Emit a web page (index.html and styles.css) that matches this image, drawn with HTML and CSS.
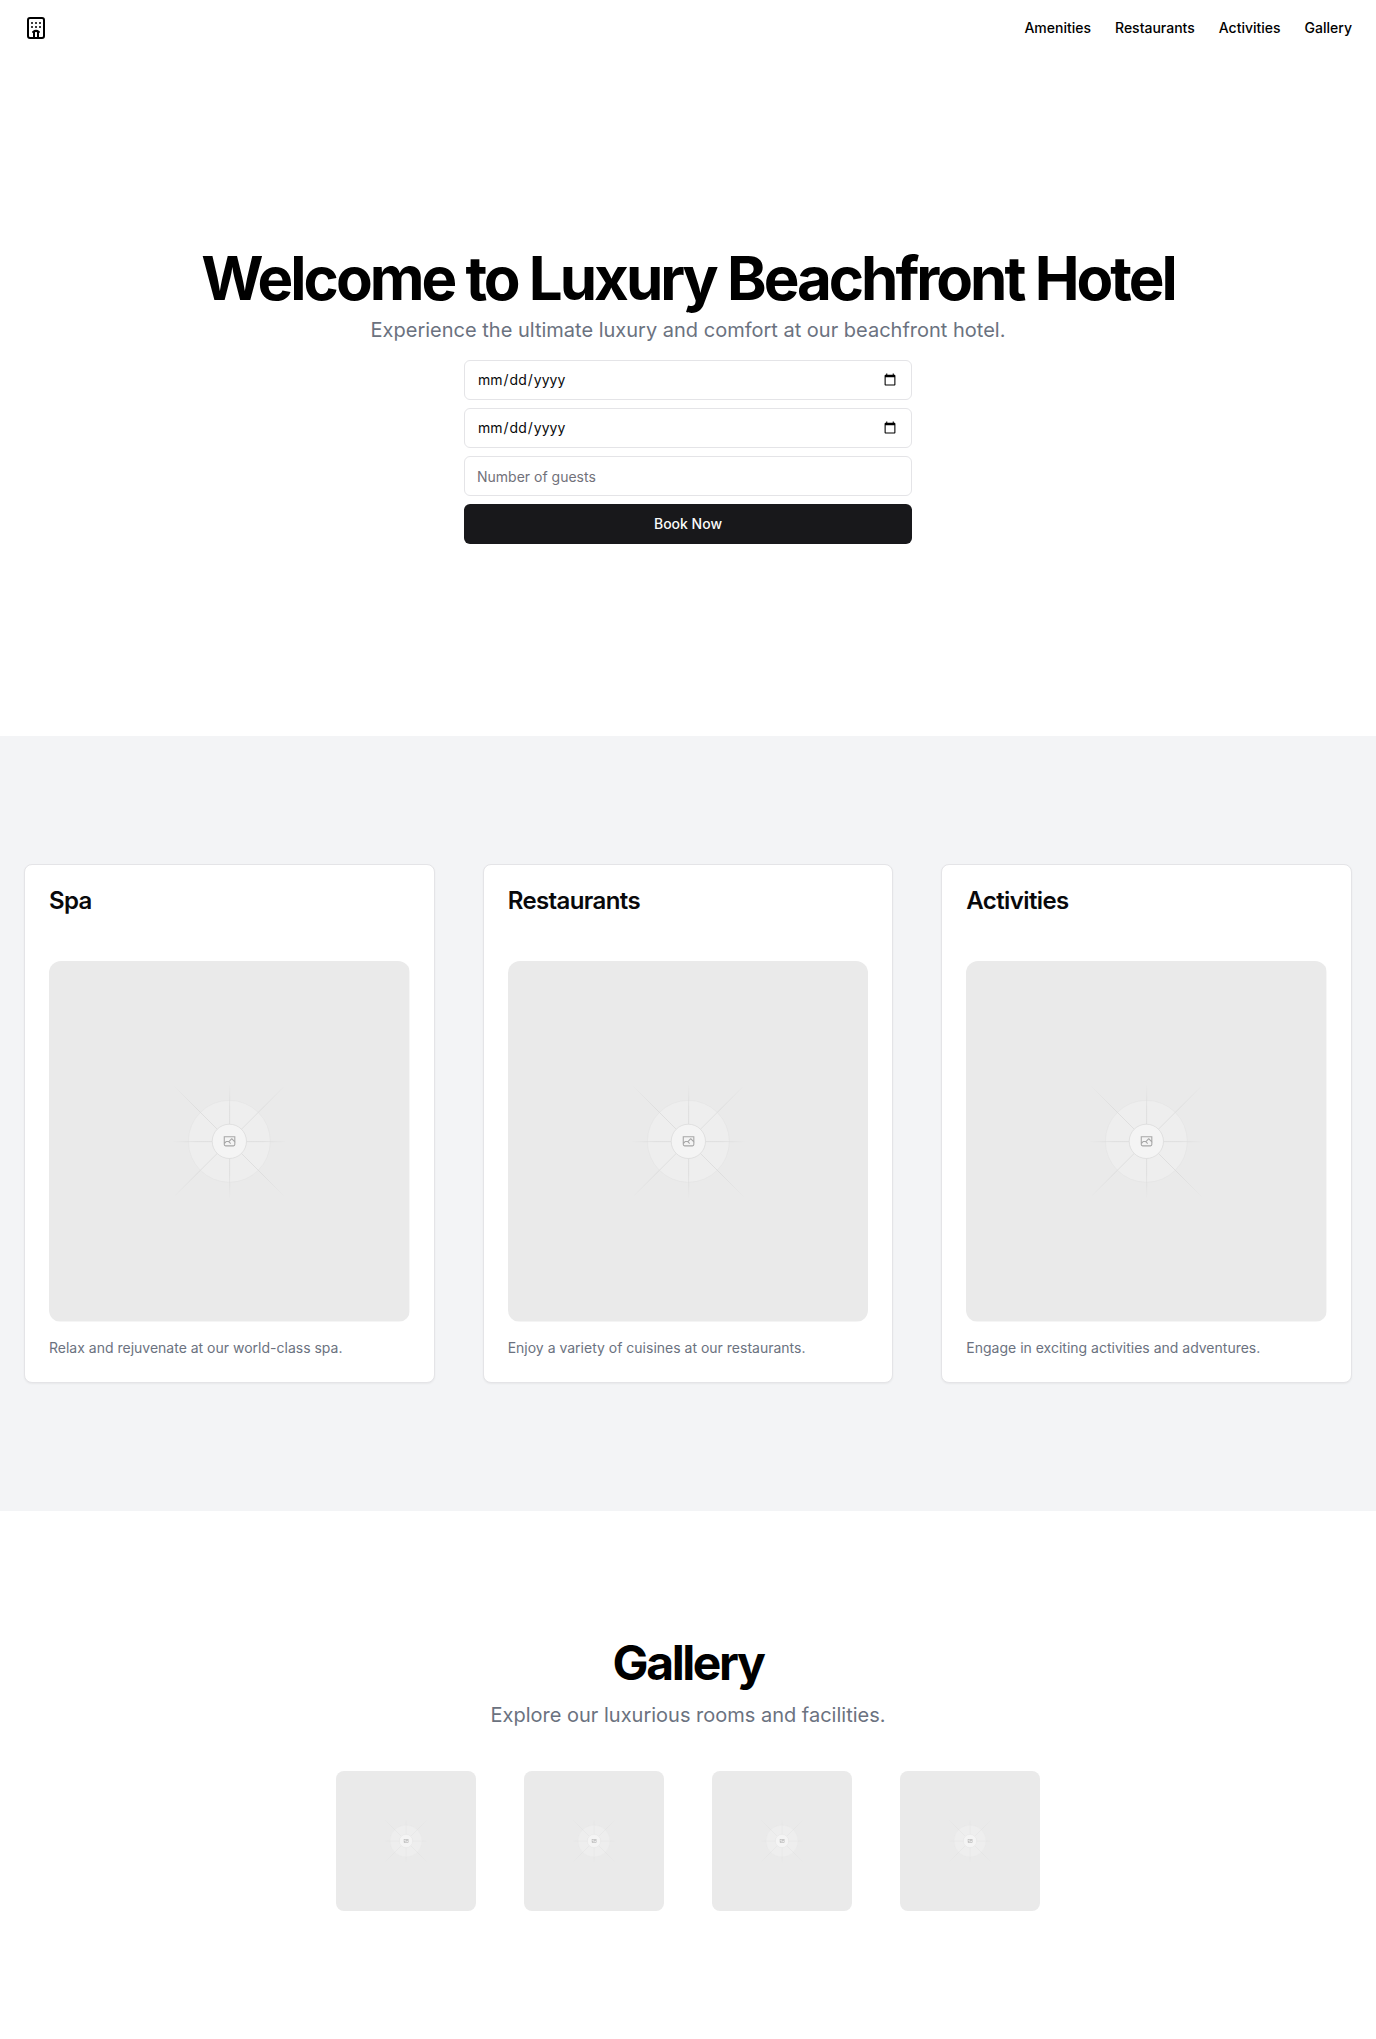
FILE: index.html
```html
<!DOCTYPE html>
<html lang="en">
<head>
<meta charset="utf-8">
<meta name="viewport" content="width=device-width, initial-scale=1">
<title>Luxury Beachfront Hotel</title>
<link rel="stylesheet" href="styles.css">
</head>
<body>
<svg class="defs" aria-hidden="true">
  <defs>
    <linearGradient id="fade-h" gradientUnits="userSpaceOnUse" x1="410" y1="0" x2="790" y2="0">
      <stop offset="0" stop-color="#c9c9c9" stop-opacity="0"/><stop offset=".208" stop-color="#c9c9c9"/>
      <stop offset=".792" stop-color="#c9c9c9"/><stop offset="1" stop-color="#c9c9c9" stop-opacity="0"/>
    </linearGradient>
    <linearGradient id="fade-v" gradientUnits="userSpaceOnUse" x1="0" y1="410" x2="0" y2="790">
      <stop offset="0" stop-color="#c9c9c9" stop-opacity="0"/><stop offset=".208" stop-color="#c9c9c9"/>
      <stop offset=".792" stop-color="#c9c9c9"/><stop offset="1" stop-color="#c9c9c9" stop-opacity="0"/>
    </linearGradient>
    <linearGradient id="fade-d" gradientUnits="userSpaceOnUse" x1="415" y1="415" x2="785" y2="785">
      <stop offset="0" stop-color="#c9c9c9" stop-opacity="0"/><stop offset=".208" stop-color="#c9c9c9"/>
      <stop offset=".792" stop-color="#c9c9c9"/><stop offset="1" stop-color="#c9c9c9" stop-opacity="0"/>
    </linearGradient>
    <linearGradient id="fade-u" gradientUnits="userSpaceOnUse" x1="415" y1="785" x2="785" y2="415">
      <stop offset="0" stop-color="#c9c9c9" stop-opacity="0"/><stop offset=".208" stop-color="#c9c9c9"/>
      <stop offset=".792" stop-color="#c9c9c9"/><stop offset="1" stop-color="#c9c9c9" stop-opacity="0"/>
    </linearGradient>
    <symbol id="placeholder" viewBox="0 0 1200 1200">
      <rect width="1200" height="1200" fill="#eaeaea"/>
      <g opacity=".5">
        <circle cx="600" cy="600" r="136" fill="#f3f3f3" stroke="#c9c9c9" stroke-opacity=".35" stroke-width="2.4"/>
        <g stroke-width="2.4" fill="none">
          <path stroke="url(#fade-h)" d="M410 601H790"/>
          <path stroke="url(#fade-v)" d="M601 410V790"/>
          <path stroke="url(#fade-d)" d="M415 415 785 785"/>
          <path stroke="url(#fade-u)" d="M415 785 785 415"/>
        </g>
        <circle cx="600" cy="600" r="57" fill="#fff" stroke="#c9c9c9" stroke-width="2.4"/>
        <path fill="#666" fill-rule="evenodd" d="M616.426 586.58h-31.434v16.176l3.553-3.554.531-.531h9.068l.074-.074 8.463-8.463h2.565l7.18 7.181V586.58Zm-15.715 14.654 3.698 3.699 1.283 1.282-2.565 2.565-1.282-1.283-5.2-5.199h-6.066l-5.514 5.514-.073.073v2.876a2.418 2.418 0 0 0 2.418 2.418h26.598a2.418 2.418 0 0 0 2.418-2.418v-8.317l-8.463-8.463-7.181 7.181-.071.072Zm-19.347 5.442v4.085a6.045 6.045 0 0 0 6.046 6.045h26.598a6.044 6.044 0 0 0 6.045-6.045v-7.108l1.356-1.355-1.282-1.283-.074-.073v-17.989h-38.689v23.43l-.146.146.146.147Z"/>
      </g>
    </symbol>
  </defs>
</svg>

<header class="header">
  <a class="logo" href="#" aria-label="Home">
    <svg width="24" height="24" viewBox="0 0 24 24" fill="none" stroke="currentColor" stroke-width="2" stroke-linecap="round" stroke-linejoin="round">
      <path d="M10 22v-6.57M12 11h.01M12 7h.01M14 15.43V22M15 16a5 5 0 0 0-6 0M16 11h.01M16 7h.01M8 11h.01M8 7h.01"/>
      <rect x="4" y="2" width="16" height="20" rx="2"/>
    </svg>
  </a>
  <nav class="nav">
    <a href="#amenities">Amenities</a>
    <a href="#restaurants">Restaurants</a>
    <a href="#activities">Activities</a>
    <a href="#gallery">Gallery</a>
  </nav>
</header>

<main>
  <section class="hero">
    <h1>Welcome to Luxury Beachfront Hotel</h1>
    <p class="lead">Experience the ultimate luxury and comfort at our beachfront hotel.</p>
    <form class="booking">
      <input class="field" type="date" aria-label="Check-in date">
      <input class="field" type="date" aria-label="Check-out date">
      <input class="field" type="number" placeholder="Number of guests" aria-label="Number of guests">
      <button class="book" type="submit">Book Now</button>
    </form>
  </section>

  <section class="features" id="amenities">
    <article class="card">
      <h3>Spa</h3>
      <svg class="photo" viewBox="0 0 1200 1200" role="img" aria-label="Spa"><use href="#placeholder"/></svg>
      <p>Relax and rejuvenate at our world-class spa.</p>
    </article>
    <article class="card" id="restaurants">
      <h3>Restaurants</h3>
      <svg class="photo" viewBox="0 0 1200 1200" role="img" aria-label="Restaurants"><use href="#placeholder"/></svg>
      <p>Enjoy a variety of cuisines at our restaurants.</p>
    </article>
    <article class="card" id="activities">
      <h3>Activities</h3>
      <svg class="photo" viewBox="0 0 1200 1200" role="img" aria-label="Activities"><use href="#placeholder"/></svg>
      <p>Engage in exciting activities and adventures.</p>
    </article>
  </section>

  <section class="gallery" id="gallery">
    <h2>Gallery</h2>
    <p class="lead">Explore our luxurious rooms and facilities.</p>
    <div class="thumbs">
      <svg class="thumb" viewBox="0 0 1200 1200" role="img" aria-label="Room"><use href="#placeholder"/></svg>
      <svg class="thumb" viewBox="0 0 1200 1200" role="img" aria-label="Suite"><use href="#placeholder"/></svg>
      <svg class="thumb" viewBox="0 0 1200 1200" role="img" aria-label="Pool"><use href="#placeholder"/></svg>
      <svg class="thumb" viewBox="0 0 1200 1200" role="img" aria-label="Lounge"><use href="#placeholder"/></svg>
    </div>
  </section>
</main>
</body>
</html>
```
FILE: styles.css
```css
*, *::before, *::after { box-sizing: border-box; }
body {
  margin: 0;
  background: #fff;
  color: #000;
  font-family: Inter, "Liberation Sans", sans-serif;
  font-size: 16px;
  line-height: 24px;
}
h1, h2, h3, p { margin: 0; }
a { color: inherit; text-decoration: none; }
.defs { position: absolute; width: 0; height: 0; }

.header {
  display: flex;
  align-items: center;
  justify-content: space-between;
  height: 56px;
  padding: 0 24px;
}
.logo, .logo svg { display: block; }
.nav {
  display: flex;
  gap: 24px;
  font-size: 14px;
  line-height: 20px;
  font-weight: 500;
}

.hero {
  display: flex;
  flex-direction: column;
  align-items: center;
  padding: 192px 24px;
  text-align: center;
}
h1, h2 {
  font-weight: 700;
  line-height: 1;
  letter-spacing: -0.05em;
}
h1 { font-size: 60px; }
h2 { font-size: 48px; }
.lead {
  color: #6b7280;
  font-size: 20px;
  line-height: 28px;
}
.hero .lead { margin: 8px 0 16px; }

.booking {
  display: flex;
  flex-direction: column;
  gap: 8px;
  width: 100%;
  max-width: 448px;
}
.field, .book {
  width: 100%;
  height: 40px;
  border-radius: 6px;
  font-family: inherit;
  font-size: 14px;
  line-height: 20px;
}
.field {
  padding: 8px 12px;
  border: 1px solid #e4e4e7;
  background: #fff;
  color: #09090b;
}
.field::placeholder { color: #71717a; }
.book {
  border: 0;
  background: #18181b;
  color: #fafafa;
  font-weight: 500;
}

.features {
  display: grid;
  grid-template-columns: repeat(3, minmax(0, 1fr));
  gap: 48px;
  padding: 128px 24px;
  background: #f3f4f6;
}
.card {
  padding: 24px;
  border: 1px solid #e4e4e7;
  border-radius: 8px;
  background: #fff;
  box-shadow: 0 1px 2px rgba(0, 0, 0, 0.05);
}
.card h3 {
  margin-bottom: 48px;
  color: #09090b;
  font-size: 24px;
  line-height: 24px;
  font-weight: 600;
  letter-spacing: -0.025em;
}
.card p {
  margin-top: 16px;
  color: #6b7280;
  font-size: 14px;
  line-height: 20px;
}
.photo {
  display: block;
  width: 100%;
  aspect-ratio: 1;
  border-radius: 12px;
}

.gallery {
  display: flex;
  flex-direction: column;
  align-items: center;
  padding: 128px 24px;
  text-align: center;
}
.gallery .lead { margin: 14px 0 42px; }
.thumbs {
  display: grid;
  grid-template-columns: repeat(4, 140px);
  gap: 48px;
}
.thumb {
  display: block;
  width: 140px;
  height: 140px;
  border-radius: 8px;
}
```
